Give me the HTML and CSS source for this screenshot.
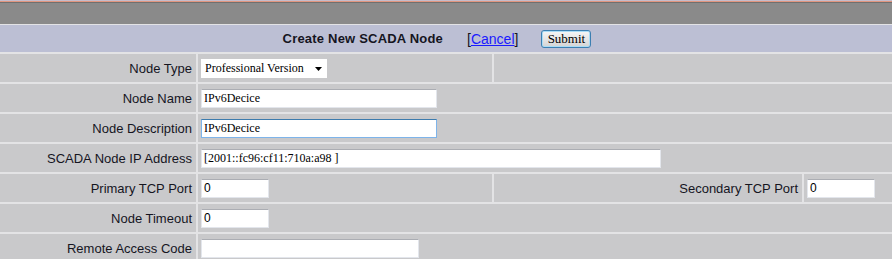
FILE: index.html
```html
<!DOCTYPE html>
<html>
  <head>
    <meta charset=utf-8>
    <title>Create New SCADA Node</title>
    <link rel="stylesheet" href="styles.css">
  </head>
  <body>
    <div class="titlebar"></div>
    <form class="node-form">
      <div class="form-head">
        <span class="form-title">Create New SCADA Node</span>
        <span class="cancel">[<a href="#">Cancel</a>]</span>
        <button type="button" class="submit">Submit</button>
      </div>

      <label class="lbl">Node Type</label>
      <div class="val">
        <span class="select-wrap">
          <select class="select">
            <option>Professional Version</option>
            <option>Standard Version</option>
          </select>
          <svg class="select-arrow" width="7" height="4" viewBox="0 0 7 4"><path d="M0 0H7L3.5 4Z" fill="#000"/></svg>
        </span>
      </div>
      <div class="val span2"></div>

      <label class="lbl">Node Name</label>
      <div class="val span3"><input class="txt w-mid" type="text" value="IPv6Decice"></div>

      <label class="lbl">Node Description</label>
      <div class="val span3"><input class="txt w-mid focused" type="text" value="IPv6Decice"></div>

      <label class="lbl">SCADA Node IP Address</label>
      <div class="val span3"><input class="txt w-wide" type="text" value="[2001::fc96:cf11:710a:a98 ]"></div>

      <label class="lbl">Primary TCP Port</label>
      <div class="val"><input class="txt num w-port" type="text" value="0"></div>
      <label class="lbl">Secondary TCP Port</label>
      <div class="val"><input class="txt num w-port" type="text" value="0"></div>

      <label class="lbl">Node Timeout</label>
      <div class="val span3"><input class="txt num w-port" type="text" value="0"></div>

      <label class="lbl">Remote Access Code</label>
      <div class="val span3"><input class="txt w-code" type="text" value=""></div>
    </form>
  </body>
</html>
```

FILE: styles.css
```css
body {
  margin: 0;
  background: #fff;
  font-family: "Liberation Sans", Arial, sans-serif;
  font-size: 13px;
  color: #15151f;
}

.titlebar {
  width: 892px;
  height: 24px;
  background: linear-gradient(#c6bccb 0 1px, #e0967f 1px 2px, #707070 2px 3px, #8a8a8a 3px);
}

.node-form {
  width: 892px;
  display: grid;
  grid-template-columns: 196px 294px 308px 88px;
  grid-auto-rows: 28px;
  grid-template-rows: 27px;
  gap: 2px;
  padding-top: 1px;
  background: #e3e3e5;
  margin: 0;
}

.form-head {
  grid-column: 1 / -1;
  background: #bcbfd4;
  display: flex;
  align-items: center;
  justify-content: center;
  padding-right: 18px;
}

.form-title {
  font-weight: bold;
  font-size: 13px;
  letter-spacing: 0.2px;
}

.cancel {
  margin-left: 24px;
  font-size: 14px;
}
.cancel a {
  color: #1a1aff;
}

.submit {
  margin-left: 23px;
  width: 50px;
  height: 18px;
  padding: 0;
  font-family: "Liberation Serif", serif;
  font-size: 13px;
  color: #000;
  border: 1px solid #3c7fb1;
  border-radius: 3px;
  background: linear-gradient(#f6f6f6, #e6e6e6 50%, #d4d4d4);
  box-shadow: inset 0 0 0 1px #a9dcf6;
}

.lbl {
  background: #c9c9cb;
  display: flex;
  align-items: center;
  justify-content: flex-end;
  padding-right: 4px;
}

.val {
  background: #c9c9cb;
  display: flex;
  align-items: center;
  padding-left: 3px;
}
.span2 { grid-column: span 2; }
.span3 { grid-column: span 3; }

.txt {
  box-sizing: border-box;
  height: 19px;
  margin: 0;
  padding: 0 2px;
  font-family: "Liberation Serif", serif;
  font-size: 12px;
  color: #000;
  background: #fff;
  border: 1px solid #e3e6ec;
  border-top-color: #abadb3;
  outline: none;
}
.txt.num {
  font-family: "Liberation Sans", Arial, sans-serif;
}
.txt.focused {
  border-color: #7eb4ea;
  border-top-color: #3d7bad;
}
.w-mid { width: 236px; }
.w-wide { width: 460px; }
.w-port { width: 68px; }
.w-code { width: 218px; }

.select-wrap {
  position: relative;
  display: inline-block;
}
.select {
  appearance: none;
  -webkit-appearance: none;
  box-sizing: border-box;
  width: 126px;
  height: 19px;
  margin: 0;
  padding: 0 0 0 3px;
  font-family: "Liberation Serif", serif;
  font-size: 12px;
  color: #000;
  background: #fff;
  border: 1px solid #fff;
  border-radius: 0;
}
.select-arrow {
  position: absolute;
  right: 5px;
  top: 8px;
}
```
